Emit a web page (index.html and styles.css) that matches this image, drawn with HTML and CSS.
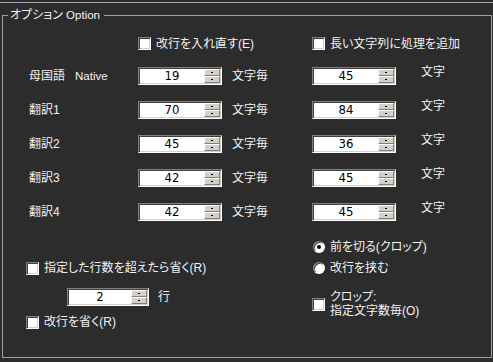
FILE: index.html
```html
<!DOCTYPE html>
<html lang="ja">
<head>
<meta charset="utf-8">
<title>オプション Option</title>
<link rel="stylesheet" href="styles.css">
</head>
<body>
<div class="topline"></div>
<fieldset class="group">
  <legend>オプション <span class="en">Option</span></legend>
  <div class="grid">
    <label class="check c2"><span class="box"></span>改行を入れ直す(E)</label>
    <label class="check c4"><span class="box"></span>長い文字列に処理を追加</label>

    <div class="lbl">母国語<span class="en gap">Native</span></div>
    <div class="spin"><span class="val">19</span><span class="btns"><span></span><span></span></span></div>
    <div class="unit">文字毎</div>
    <div class="spin"><span class="val">45</span><span class="btns"><span></span><span></span></span></div>
    <div class="unit2">文字</div>

    <div class="lbl">翻訳1</div>
    <div class="spin"><span class="val">70</span><span class="btns"><span></span><span></span></span></div>
    <div class="unit">文字毎</div>
    <div class="spin"><span class="val">84</span><span class="btns"><span></span><span></span></span></div>
    <div class="unit2">文字</div>

    <div class="lbl">翻訳2</div>
    <div class="spin"><span class="val">45</span><span class="btns"><span></span><span></span></span></div>
    <div class="unit">文字毎</div>
    <div class="spin"><span class="val">36</span><span class="btns"><span></span><span></span></span></div>
    <div class="unit2">文字</div>

    <div class="lbl">翻訳3</div>
    <div class="spin"><span class="val">42</span><span class="btns"><span></span><span></span></span></div>
    <div class="unit">文字毎</div>
    <div class="spin"><span class="val">45</span><span class="btns"><span></span><span></span></span></div>
    <div class="unit2">文字</div>

    <div class="lbl">翻訳4</div>
    <div class="spin"><span class="val">42</span><span class="btns"><span></span><span></span></span></div>
    <div class="unit">文字毎</div>
    <div class="spin"><span class="val">45</span><span class="btns"><span></span><span></span></span></div>
    <div class="unit2">文字</div>
  </div>

  <div class="lower">
    <div class="lcol">
      <label class="check"><span class="box"></span>指定した行数を超えたら省く(R)</label>
      <div class="spinrow">
        <div class="spin small"><span class="val">2</span><span class="btns"><span></span><span></span></span></div>
        <span>行</span>
      </div>
      <label class="check last"><span class="box"></span>改行を省く(R)</label>
    </div>
    <div class="rcol">
      <label class="radiorow"><span class="radio on"></span>前を切る(クロップ)</label>
      <label class="radiorow second"><span class="radio"></span>改行を挟む</label>
      <label class="check multi"><span class="box"></span><span class="ml">クロップ:<br>指定文字数毎(O)</span></label>
    </div>
  </div>
</fieldset>
</body>
</html>
```

FILE: styles.css
```css
html, body {
  margin: 0;
  background: #2c2c2c;
}
body {
  color: #f2f2f2;
  font-family: "Liberation Sans", "Noto Sans CJK JP", sans-serif;
  font-size: 12px;
  line-height: 14px;
  font-feature-settings: "palt";
  height: 362px;
  overflow: hidden;
}
.en {
  font-size: 11.5px;
}
.gap {
  margin-left: 10px;
}
.topline {
  margin-top: 2px;
  border-top: 1px solid #a6a6a6;
}
.group {
  margin: 5px 1px 0 2px;
  padding: 0;
  border: 1px solid #a0a0a0;
  height: 350px;
  box-sizing: border-box;
  min-width: 0;
}
.group legend {
  margin-left: 5px;
  padding: 0 4px 0 2px;
  line-height: 14px;
}
.grid {
  display: grid;
  grid-template-columns: 109px 84px 90px 84px 1fr;
  grid-template-rows: 15px repeat(5, 18px);
  row-gap: 16px;
  padding: 14px 0 0 26px;
  align-items: center;
}
.c2 { grid-column: 2 / 4; }
.c4 { grid-column: 4 / 6; }
.check {
  display: flex;
  align-items: center;
  gap: 5px;
  white-space: nowrap;
}
.box {
  flex: none;
  width: 13px;
  height: 13px;
  box-sizing: border-box;
  background: #fff;
  border: 1px solid;
  border-color: #808080 #ffffff #ffffff #808080;
  box-shadow: inset 1px 1px 0 #404040, inset -1px -1px 0 #d4d0c8;
}
.unit {
  padding-left: 10px;
}
.unit2 {
  padding-left: 25px;
  align-self: start;
  margin-top: -2px;
}
.spin {
  display: flex;
  width: 84px;
  height: 18px;
  box-sizing: border-box;
  background: #fff;
  border: 1px solid;
  border-color: #808080 #ffffff #ffffff #808080;
  box-shadow: inset 1px 1px 0 #404040, inset -1px -1px 0 #d4d0c8;
  padding: 1px;
}
.spin.small {
  width: 82px;
}
.val {
  flex: 1;
  text-align: center;
  color: #000;
  font-family: "DejaVu Sans Condensed", "DejaVu Sans Mono", monospace;
  font-size: 13px;
  line-height: 14px;
}
.btns {
  flex: none;
  width: 16px;
  display: flex;
  flex-direction: column;
}
.btns span {
  flex: 1;
  box-sizing: border-box;
  background: #d4d0c8;
  border: 1px solid;
  border-color: #ffffff #808080 #808080 #ffffff;
  display: flex;
  align-items: center;
  justify-content: center;
}
.btns span::after {
  content: "";
  width: 2px;
  height: 1px;
  background: #000;
}
.lower {
  display: flex;
  padding-top: 18px;
}
.lcol {
  width: 309px;
  box-sizing: border-box;
  padding: 22px 0 0 23px;
  display: flex;
  flex-direction: column;
  align-items: flex-start;
}
.spinrow {
  display: flex;
  align-items: center;
  gap: 9px;
  margin: 13px 0 0 41px;
}
.check.last {
  margin-top: 9px;
}
.rcol {
  display: flex;
  flex-direction: column;
  align-items: flex-start;
  padding-top: 1px;
}
.radiorow {
  display: flex;
  align-items: center;
  gap: 5px;
  padding-left: 1px;
  white-space: nowrap;
}
.radiorow.second {
  margin-top: 7px;
}
.radio {
  flex: none;
  width: 12px;
  height: 12px;
  box-sizing: border-box;
  border-radius: 50%;
  background: #fff;
  border: 1px solid;
  border-color: #808080 #ffffff #ffffff #808080;
  box-shadow: inset 1px 1px 0 #404040;
  display: flex;
  align-items: center;
  justify-content: center;
}
.radio.on::after {
  content: "";
  width: 4px;
  height: 4px;
  border-radius: 50%;
  background: #000;
}
.check.multi {
  margin-top: 16px;
}
.ml {
  line-height: 13.5px;
}
```
